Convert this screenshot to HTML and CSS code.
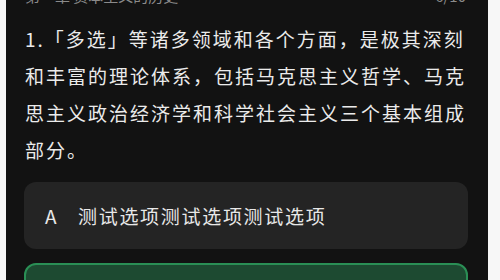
FILE: index.html
```html
<!DOCTYPE html>
<html lang="zh-CN">
<head>
    <meta charset="UTF-8">
    <meta name="viewport" content="width=device-width, initial-scale=1.0">
    <title>答题</title>
    <link rel="stylesheet" href="styles.css">
</head>
<body>
    <div class="page">
        <div class="card">
            <div class="head">
                <span>第一章 资本主义的历史</span>
                <span>6/10</span>
            </div>
            <div class="question">1.「多选」等诸多领域和各个方面，是极其深刻和丰富的理论体系，包括马克思主义哲学、马克思主义政治经济学和科学社会主义三个基本组成部分。</div>
            <div class="options">
                <div class="option">
                    <span class="label">A</span>
                    <span class="text">测试选项测试选项测试选项</span>
                </div>
                <div class="option selected">
                    <span class="label">B</span>
                    <span class="text">测试选项测试选项测试选项</span>
                </div>
            </div>
        </div>
    </div>
</body>
</html>
```

FILE: styles.css
```css
body {
    margin: 0;
    background-color: #f7f7f7;
    font-family: "Noto Sans CJK SC", "Noto Sans", sans-serif;
    overflow: hidden;
}
.page {
    padding: 0 12px 0 6px;
}
.card {
    margin-top: -22px;
    background-color: #121212;
    border-radius: 22px;
    padding: 0 20px 20px 18px;
}
.head {
    display: flex;
    justify-content: space-between;
    padding: 8px 2px 0 1px;
    font-size: 15px;
    line-height: 20px;
    color: #8a8a8a;
}
.question {
    margin-top: 14px;
    padding-left: 1px;
    font-size: 19px;
    line-height: 37px;
    letter-spacing: 2px;
    color: #ebebeb;
}
.options {
    display: flex;
    flex-direction: column;
    gap: 14px;
    margin-top: 14px;
}
.option {
    display: flex;
    align-items: center;
    height: 67px;
    padding: 0 21px;
    background-color: #242424;
    border-radius: 12px;
    font-size: 19px;
    color: #e8e8e8;
    box-sizing: border-box;
}
.option .label {
    width: 33px;
    flex-shrink: 0;
}
.option .text {
    letter-spacing: 1.7px;
}
.option.selected {
    background-color: #1d4a31;
    border: 2px solid #2a8f55;
}
```
